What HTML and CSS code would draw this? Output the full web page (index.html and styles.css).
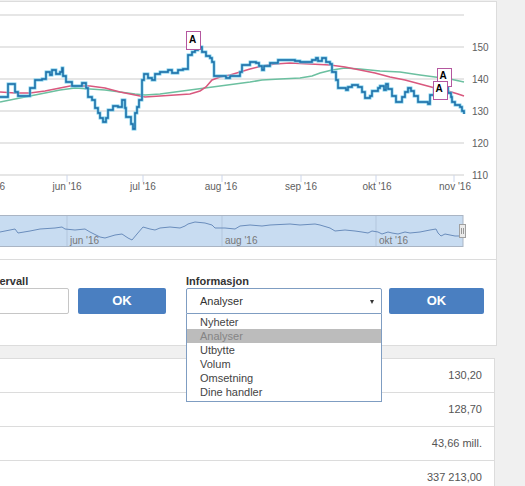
FILE: index.html
```html
<!DOCTYPE html>
<html lang="no">
<head>
<meta charset="utf-8">
<title>Kurs</title>
<link rel="stylesheet" href="styles.css">
</head>
<body>
<div class="page">
  <div class="panel">
    <svg class="chart" width="496" height="257" viewBox="0 2 496 257" xmlns="http://www.w3.org/2000/svg">
      <g class="grid">
        <line x1="0" y1="15" x2="464" y2="15"/>
        <line x1="0" y1="47" x2="464" y2="47"/>
        <line x1="0" y1="79" x2="464" y2="79"/>
        <line x1="0" y1="111" x2="464" y2="111"/>
        <line x1="0" y1="143" x2="464" y2="143"/>
        <line x1="0" y1="175" x2="464" y2="175"/>
      </g>
      <g class="ticks">
        <line x1="67" y1="175" x2="67" y2="182"/>
        <line x1="143" y1="175" x2="143" y2="182"/>
        <line x1="222" y1="175" x2="222" y2="182"/>
        <line x1="301" y1="175" x2="301" y2="182"/>
        <line x1="376" y1="175" x2="376" y2="182"/>
        <line x1="454" y1="175" x2="454" y2="182"/>
      </g>
      <g class="ylab">
        <text x="472" y="51">150</text>
        <text x="472" y="83">140</text>
        <text x="472" y="115">130</text>
        <text x="472" y="147">120</text>
        <text x="472" y="179">110</text>
      </g>
      <g class="xlab">
        <text x="-11" y="190">mai '16</text>
        <text x="67" y="190">jun '16</text>
        <text x="143" y="190">jul '16</text>
        <text x="221" y="190">aug '16</text>
        <text x="301" y="190">sep '16</text>
        <text x="377" y="190">okt '16</text>
        <text x="455" y="190">nov '16</text>
      </g>
      <polyline class="ma-green" points="0,102 15,99 30,96 45,93 60,90 75,88 90,89 105,90 120,92 135,94 145,95 160,94 175,92 190,90 205,88 220,86 235,84 250,82 262,80 280,79 300,78 312,76 320,73 332,70 345,68 360,69 380,71 400,72 420,75 435,77 450,79 464,82"/>
      <polyline class="ma-red" points="0,92 15,93 30,93 45,91 55,89 70,86 90,86 105,88 120,92 135,95 145,97 160,96 175,95 190,94 200,91 206,87 212,80 220,77 230,75 240,72 250,69 262,66 275,64 290,63 310,64 330,65 345,67 360,70 375,73 390,77 405,80 420,84 435,88 448,91 458,94 464,96"/>
      <path class="price-glow" d="M0,97 H8 V84 H15 V92 H18 V96 H30 V88 H35 V80 H42 V79 H46 V72 H50 V75 H52 V70 H56 V74 H60 V72 H62 V68 H63 V76 H66 V82 H72 V86 H82 V83 H86 V88 H88 V97 H92 V100 H95 V108 H98 V113 H100 V118 H103 V122 H106 V118 H108 V110 H113 V106 H118 V107 H122 V100 H125 V108 H126 V117 H131 V124 H133 V129 H135 V113 H137 V107 H139 V100 H142 V80 H144 V74 H148 V78 H152 V80 H155 V74 H160 V72 H168 V70 H172 V73 H178 V70 H183 V69 H188 V55 H192 V52 H195 V50 H198 V47 H202 V52 H206 V56 H210 V58 H212 V62 H214 V76 H226 V78 H230 V76 H240 V72 H242 V65 H250 V62 H256 V63 H259 V66 H262 V70 H264 V66 H270 V63 H278 V60 H295 V61 H300 V62 H312 V60 H316 V58 H318 V61 H322 V58 H326 V62 H330 V64 H332 V72 H336 V80 H338 V88 H346 V90 H348 V87 H352 V85 H358 V87 H362 V92 H365 V98 H370 V96 H372 V91 H378 V88 H380 V86 H384 V90 H386 V84 H388 V89 H392 V96 H396 V102 H402 V97 H405 V92 H408 V88 H411 V91 H414 V96 H418 V102 H428 V104 H430 V95 H434 V89 H438 V86 H446 V86 H448 V93 H451 V97 H452 V102 H455 V105 H460 V107 H462 V111 H464 V114"/>
      <path class="price" d="M0,97 H8 V84 H15 V92 H18 V96 H30 V88 H35 V80 H42 V79 H46 V72 H50 V75 H52 V70 H56 V74 H60 V72 H62 V68 H63 V76 H66 V82 H72 V86 H82 V83 H86 V88 H88 V97 H92 V100 H95 V108 H98 V113 H100 V118 H103 V122 H106 V118 H108 V110 H113 V106 H118 V107 H122 V100 H125 V108 H126 V117 H131 V124 H133 V129 H135 V113 H137 V107 H139 V100 H142 V80 H144 V74 H148 V78 H152 V80 H155 V74 H160 V72 H168 V70 H172 V73 H178 V70 H183 V69 H188 V55 H192 V52 H195 V50 H198 V47 H202 V52 H206 V56 H210 V58 H212 V62 H214 V76 H226 V78 H230 V76 H240 V72 H242 V65 H250 V62 H256 V63 H259 V66 H262 V70 H264 V66 H270 V63 H278 V60 H295 V61 H300 V62 H312 V60 H316 V58 H318 V61 H322 V58 H326 V62 H330 V64 H332 V72 H336 V80 H338 V88 H346 V90 H348 V87 H352 V85 H358 V87 H362 V92 H365 V98 H370 V96 H372 V91 H378 V88 H380 V86 H384 V90 H386 V84 H388 V89 H392 V96 H396 V102 H402 V97 H405 V92 H408 V88 H411 V91 H414 V96 H418 V102 H428 V104 H430 V95 H434 V89 H438 V86 H446 V86 H448 V93 H451 V97 H452 V102 H455 V105 H460 V107 H462 V111 H464 V114"/>
      <g class="flag">
        <rect x="186.5" y="31.5" width="14" height="18"/>
        <text x="192.5" y="43">A</text>
        <rect x="437.5" y="68.5" width="14" height="18"/>
        <text x="443" y="79">A</text>
        <rect x="433.5" y="81.5" width="14" height="18"/>
        <text x="439" y="92">A</text>
      </g>
      <rect class="nav-bg" x="-2" y="215.5" width="465" height="31"/>
      <g class="nav-grid">
        <line x1="67" y1="216" x2="67" y2="246"/>
        <line x1="222" y1="216" x2="222" y2="246"/>
        <line x1="376" y1="216" x2="376" y2="246"/>
      </g>
      <polyline class="nav-line" points="0,232 10,230 15,229 18,233 30,231 35,230 40,229 55,228 62,227 65,229 75,230 85,229 90,232 100,237 105,238 115,235 122,234 128,238 132,240 137,234 143,227 150,229 155,230 160,228 170,227 180,228 185,226 188,224 195,222 205,223 212,225 215,228 225,228 235,229 240,226 250,225 262,226 270,225 290,224 300,225 315,224 320,225 330,228 335,231 345,230 355,231 362,232 368,233 372,231 378,232 382,234 388,232 392,233 398,234 405,232 410,233 420,232 430,230 436,229 438,233 441,236 445,234 450,235 455,236 462,236"/>
      <g class="nav-lab">
        <text x="70" y="244">jun '16</text>
        <text x="225" y="244">aug '16</text>
        <text x="379" y="244">okt '16</text>
      </g>
      <g class="handle">
        <rect x="459.5" y="224.5" width="6" height="13"/>
        <line x1="461.5" y1="228" x2="461.5" y2="234"/>
        <line x1="463.5" y1="228" x2="463.5" y2="234"/>
      </g>
    </svg>
    <div class="form">
      <div class="field field-interval">
        <div class="label">Intervall</div>
        <div class="input"></div>
      </div>
      <div class="btn btn-first">OK</div>
      <div class="field field-info">
        <div class="label">Informasjon</div>
        <div class="select"><span>Analyser</span><span class="arrow"></span></div>
        <ul class="options">
          <li>Nyheter</li>
          <li class="active">Analyser</li>
          <li>Utbytte</li>
          <li>Volum</li>
          <li>Omsetning</li>
          <li>Dine handler</li>
        </ul>
      </div>
      <div class="btn btn-second">OK</div>
    </div>
  </div>
  <div class="table">
    <div class="row">130,20</div>
    <div class="row">128,70</div>
    <div class="row">43,66 mill.</div>
    <div class="row">337 213,00</div>
  </div>
</div>
</body>
</html>
```

FILE: styles.css
```css
html, body {
  margin: 0;
  padding: 0;
}
body {
  background: #f0f0f0;
  font-family: "Liberation Sans", Arial, sans-serif;
  color: #333;
  overflow: hidden;
}
.page {
  width: 525px;
  height: 486px;
  overflow: hidden;
}
.panel {
  width: 496px;
  margin-top: 1px;
  background: #fff;
  border-top: 1px solid #dcdcdc;
  border-right: 1px solid #dcdcdc;
  border-bottom: 1px solid #dcdcdc;
}
.chart {
  display: block;
  overflow: hidden;
}
.grid line {
  stroke: #dedede;
  stroke-width: 1.6;
}
.ticks line {
  stroke: #ccd6eb;
  stroke-width: 1;
}
.ylab text, .xlab text {
  font-family: "Liberation Sans", Arial, sans-serif;
  font-size: 10px;
  fill: #606060;
}
.xlab text {
  text-anchor: middle;
}
.ma-green {
  fill: none;
  stroke: #6cc0a0;
  stroke-width: 1.6;
}
.ma-red {
  fill: none;
  stroke: #d9587e;
  stroke-width: 1.6;
}
.price-glow {
  fill: none;
  stroke: #6cc8e8;
  stroke-width: 2.8;
}
.price {
  fill: none;
  stroke: #1f6ca5;
  stroke-width: 1.4;
}
.flag rect {
  fill: #fff;
  stroke: #b4579f;
  stroke-width: 1;
}
.flag text {
  font-family: "Liberation Sans", Arial, sans-serif;
  font-size: 10px;
  font-weight: bold;
  fill: #000;
  text-anchor: middle;
}
.nav-bg {
  fill: #c8dcf1;
  stroke: #aab5c4;
  stroke-width: 1;
}
.nav-grid line {
  stroke: #b3c6dd;
  stroke-width: 1;
}
.nav-line {
  fill: none;
  stroke: #6a8dbc;
  stroke-width: 1;
}
.nav-lab text {
  font-family: "Liberation Sans", Arial, sans-serif;
  font-size: 10px;
  fill: #777;
}
.handle rect {
  fill: #ebebeb;
  stroke: #a0a0a0;
  stroke-width: 1;
}
.handle line {
  stroke: #999;
  stroke-width: 1;
}
.form {
  border-top: 1px solid #dcdcdc;
  padding: 14px 0 0 0;
  box-sizing: border-box;
  height: 86px;
  display: flex;
  align-items: flex-start;
}
.field {
  display: flex;
  flex-direction: column;
  position: relative;
}
.label {
  font-size: 11px;
  font-weight: bold;
  line-height: 14px;
  height: 14px;
  color: #333;
  white-space: nowrap;
}
.field-interval {
  margin-left: -14px;
  width: 83px;
}
.input {
  height: 26px;
  box-sizing: border-box;
  border: 1px solid #c6c6c6;
  border-radius: 2px;
  background: #fff;
}
.btn {
  margin-top: 14px;
  height: 26px;
  line-height: 26px;
  background: #4a7fc1;
  border-radius: 2px;
  color: #fff;
  font-size: 13px;
  font-weight: bold;
  text-align: center;
}
.btn-first {
  margin-left: 9px;
  width: 88px;
}
.field-info {
  margin-left: 20px;
  width: 196px;
}
.btn-second {
  margin-left: 7px;
  width: 95px;
}
.select {
  height: 26px;
  box-sizing: border-box;
  border: 1px solid #7f9dc2;
  border-radius: 2px 2px 0 0;
  background: #fff;
  display: flex;
  align-items: center;
  justify-content: space-between;
  padding: 0 7px 0 13px;
  font-size: 11px;
  color: #333;
}
.arrow {
  width: 0;
  height: 0;
  border-left: 2.5px solid transparent;
  border-right: 2.5px solid transparent;
  border-top: 4px solid #333;
  margin-top: 1px;
}
.options {
  position: absolute;
  top: 100%;
  left: 0;
  width: 196px;
  box-sizing: border-box;
  margin: 0;
  padding: 1px 0 2px 0;
  list-style: none;
  background: #fff;
  border: 1px solid #7f9dc2;
  border-top: none;
  z-index: 5;
}
.options li {
  height: 14px;
  line-height: 14px;
  padding-left: 13px;
  font-size: 11px;
  color: #444;
}
.options li.active {
  background: #bcbcbc;
  color: #858585;
}
.table {
  margin-top: 12px;
  margin-left: -10px;
  width: 505px;
  box-sizing: border-box;
  background: #fff;
  border: 1px solid #dcdcdc;
}
.row {
  height: 33px;
  line-height: 33px;
  border-bottom: 1px solid #dcdcdc;
  text-align: right;
  padding-right: 12px;
  font-size: 11px;
  color: #555;
}
```
